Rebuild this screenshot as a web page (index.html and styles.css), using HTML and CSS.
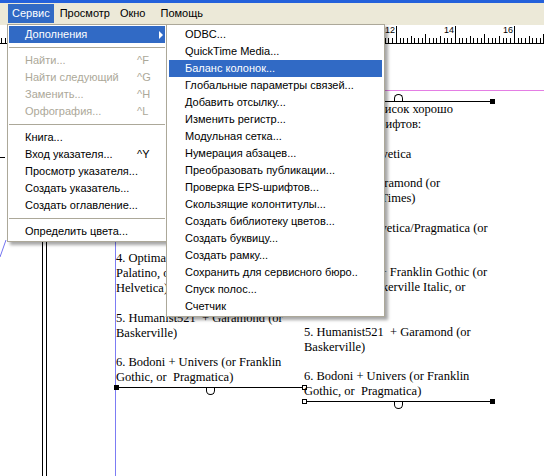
FILE: index.html
```html
<!DOCTYPE html>
<html>
<head>
<meta charset="UTF-8">
<title>PageMaker — Сервис</title>
<link rel="stylesheet" href="styles.css">
</head>
<body>
<div class="screen">
    <div class="titlebar"></div>

    <div class="menubar">
        <span class="menubar-item active">Сервис</span>
        <span class="menubar-item">Просмотр</span>
        <span class="menubar-item wide">Окно</span>
        <span class="menubar-item">Помощь</span>
    </div>

    <!-- горизонтальная линейка -->
    <svg class="ruler" width="544" height="19" viewBox="0 0 544 19" shape-rendering="crispEdges">
        <defs>
            <pattern id="ticks" x="42" y="0" width="59" height="19" patternUnits="userSpaceOnUse">
                <path stroke="#000" d="M0.5 1V18 M4.5 13V18 M7.5 13V18 M11.5 13V18 M15.5 11V18 M18.5 13V18 M22.5 13V18 M26.5 13V18 M29.5 9V18 M33.5 13V18 M37.5 13V18 M40.5 13V18 M44.5 11V18 M48.5 13V18 M51.5 13V18 M55.5 13V18"/>
            </pattern>
        </defs>
        <rect width="544" height="19" fill="#fff"/>
        <rect width="544" height="19" fill="url(#ticks)"/>
        <line x1="0" y1="18.5" x2="544" y2="18.5" stroke="#000"/>
        <g class="ruler-nums" text-anchor="end">
            <text x="395" y="8">12</text>
            <text x="454" y="8">14</text>
            <text x="513" y="8">16</text>
        </g>
    </svg>

    <div class="canvas">
        <div class="page-edge"></div>
        <div class="guide-v"></div>
        <div class="guide-h"></div>
        <div class="crop-mark"></div>
        <svg class="stray-line" width="7" height="18" viewBox="0 0 7 18">
            <line x1="6" y1="0" x2="0" y2="17" stroke="#7474f0"/>
        </svg>

        <!-- левый блок: видна только нижняя часть -->
        <div class="frame frame-left">
            <p>4. Optima&nbsp; + Garamond (or<br>Palatino, or Times +<br>Helvetica)</p>
            <p>5. Humanist521&nbsp; + Garamond (or<br>Baskerville)</p>
            <p>6. Bodoni + Univers (or Franklin<br>Gothic, or&nbsp; Pragmatica)</p>
            <div class="shade bottom"><span class="grip"></span><span class="grip right hollow"></span><span class="knob down"></span></div>
        </div>

        <div class="frame frame-right">
            <div class="shade"><span class="grip hollow"></span><span class="grip right"></span><span class="knob up"></span></div>
            <p>Вот краткий список хорошо<br>сочетаемых шрифтов:</p>
            <p>1. Times&nbsp; + Helvetica</p>
            <p>2. Bodoni&nbsp; + Garamond (or<br>Baskerville, or Times)</p>
            <p>3. Futura + Helvetica/Pragmatica (or<br>Univers)</p>
            <p>4. Baskerville&nbsp; + Franklin Gothic (or<br>Garamond, Baskerville Italic, or<br>Palatino)</p>
            <p>5. Humanist521&nbsp; + Garamond (or<br>Baskerville)</p>
            <p>6. Bodoni + Univers (or Franklin<br>Gothic, or&nbsp; Pragmatica)</p>
            <div class="shade bottom"><span class="grip hollow"></span><span class="grip right"></span><span class="knob down"></span></div>
        </div>
    </div>

    <!-- меню Сервис -->
    <div class="menu main-menu">
        <div class="item active"><span class="label">Дополнения</span><span class="arrow"></span></div>
        <div class="sep"></div>
        <div class="item disabled"><span class="label">Найти...</span><span class="key">^F</span></div>
        <div class="item disabled"><span class="label">Найти следующий</span><span class="key">^G</span></div>
        <div class="item disabled"><span class="label">Заменить...</span><span class="key">^H</span></div>
        <div class="item disabled"><span class="label">Орфография...</span><span class="key">^L</span></div>
        <div class="sep"></div>
        <div class="item"><span class="label">Книга...</span></div>
        <div class="item"><span class="label">Вход указателя...</span><span class="key">^Y</span></div>
        <div class="item"><span class="label">Просмотр указателя...</span></div>
        <div class="item"><span class="label">Создать указатель...</span></div>
        <div class="item"><span class="label">Создать оглавление...</span></div>
        <div class="sep"></div>
        <div class="item"><span class="label">Определить цвета...</span></div>
    </div>

    <!-- подменю Дополнения -->
    <div class="menu sub-menu">
        <div class="item">ODBC...</div>
        <div class="item">QuickTime Media...</div>
        <div class="item active">Баланс колонок...</div>
        <div class="item">Глобальные параметры связей...</div>
        <div class="item">Добавить отсылку...</div>
        <div class="item">Изменить регистр...</div>
        <div class="item">Модульная сетка...</div>
        <div class="item">Нумерация абзацев...</div>
        <div class="item">Преобразовать публикации...</div>
        <div class="item">Проверка EPS-шрифтов...</div>
        <div class="item">Скользящие колонтитулы...</div>
        <div class="item">Создать библиотеку цветов...</div>
        <div class="item">Создать буквицу...</div>
        <div class="item">Создать рамку...</div>
        <div class="item">Сохранить для сервисного бюро..</div>
        <div class="item">Спуск полос...</div>
        <div class="item">Счетчик</div>
    </div>
</div>
</body>
</html>
```
FILE: styles.css
```css
* {
    box-sizing: border-box;
}

body {
    margin: 0;
    font-family: "Liberation Sans", Arial, sans-serif;
    font-size: 11px;
    color: #000;
    background: #fff;
}

.screen {
    position: relative;
    width: 544px;
    height: 476px;
    overflow: hidden;
    background: #fff;
}

.titlebar {
    height: 3px;
    background: #2461db;
}

/* строка меню */
.menubar {
    display: flex;
    gap: 2px;
    height: 22px;
    padding-left: 8px;
    background: #ece9d8;
}

.menubar-item {
    height: 19px;
    margin-top: 1px;
    padding: 0 4px;
    line-height: 19px;
}

.menubar-item.wide {
    padding-right: 9px;
}

.menubar-item.active {
    background: #316ac5;
    color: #fff;
}

.ruler {
    display: block;
}

.ruler-nums {
    font-family: "Liberation Sans", Arial, sans-serif;
    font-size: 9px;
    fill: #000;
}

/* рабочая область */
.canvas {
    position: relative;
    height: 432px;
}

.page-edge {
    position: absolute;
    left: 42px;
    top: 16px;
    bottom: 0;
    width: 5px;
    border-left: 1px solid #000;
    border-right: 1px solid #000;
}

.guide-v {
    position: absolute;
    left: 115px;
    top: 16px;
    bottom: 0;
    width: 1px;
    background: #7c7cf4;
}

.guide-h {
    position: absolute;
    left: 46px;
    right: 0;
    top: 46px;
    height: 1px;
    background: #e47ee4;
}

.crop-mark {
    position: absolute;
    left: 0;
    top: 113px;
    width: 5px;
    height: 1px;
    background: #000;
}

.stray-line {
    position: absolute;
    left: 0;
    top: 196px;
}

/* текстовые блоки */
.frame {
    position: absolute;
    width: 189px;
    font-family: "Liberation Serif", "Times New Roman", serif;
    font-size: 12.5px;
    line-height: 15px;
    white-space: nowrap;
}

.frame-left {
    left: 116px;
    top: 207px;
}

.frame-right {
    left: 304px;
    top: 57px;
}

.frame p {
    margin: 0 0 14.5px;
}

.frame p:last-of-type {
    margin-bottom: 0;
}

.shade {
    position: relative;
    height: 1px;
    background: #000;
}

.shade.bottom {
    margin-top: 2px;
}

.grip {
    position: absolute;
    left: -2px;
    top: -2px;
    width: 5px;
    height: 5px;
    background: #000;
}

.grip.right {
    left: auto;
    right: -2px;
}

.grip.hollow {
    background: #fff;
    border: 1px solid #000;
}

.knob {
    position: absolute;
    left: 50%;
    width: 9px;
    height: 7px;
    margin-left: -5px;
    background: #fff;
    border: 1px solid #000;
}

.knob.up {
    bottom: 1px;
    border-bottom: none;
    border-radius: 5px 5px 0 0;
}

.knob.down {
    top: 1px;
    border-top: none;
    border-radius: 0 0 5px 5px;
}

/* выпадающие меню */
.menu {
    position: absolute;
    top: 24px;
    padding: 1px;
    background: #fff;
    border: 1px solid #aca899;
    box-shadow: 3px 3px 3px rgba(0, 0, 0, 0.35);
}

.main-menu {
    left: 7px;
    width: 160px;
}

.sub-menu {
    left: 166px;
    width: 219px;
    padding: 1px 2px;
}

.item {
    display: flex;
    align-items: center;
    height: 17px;
    padding-left: 16px;
    line-height: 17px;
    white-space: nowrap;
}

.item .key {
    width: 15px;
    margin-left: auto;
    margin-right: 13px;
}

.item.active {
    background: #316ac5;
    color: #fff;
}

.item.disabled {
    color: #aca899;
}

.arrow {
    width: 0;
    height: 0;
    margin-left: auto;
    margin-right: 2px;
    border-left: 4px solid #fff;
    border-top: 4px solid transparent;
    border-bottom: 4px solid transparent;
}

.sep {
    height: 1px;
    margin: 4px 0;
    background: #aca899;
}
```
